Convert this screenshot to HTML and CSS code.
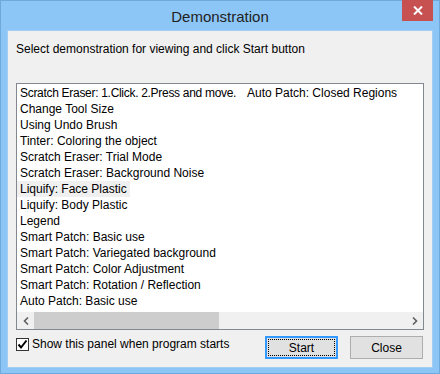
FILE: index.html
```html
<!DOCTYPE html>
<html lang="en">
<head>
    <meta charset="UTF-8">
    <title>Demonstration</title>
    <link rel="stylesheet" href="styles.css">
</head>
<body>
    <div class="window">
        <div class="titlebar">
            <span class="title">Demonstration</span>
            <div class="close-x">
                <svg width="10" height="9" viewBox="0 0 10 9">
                    <path d="M1 0.5 L9 8.5 M9 0.5 L1 8.5" stroke="#fff" stroke-width="2"/>
                </svg>
            </div>
        </div>
        <div class="client">
            <p class="hint">Select demonstration for viewing and click Start button</p>
            <div class="listbox">
                <ul class="items">
                    <li class="tight">Scratch Eraser: 1.Click. 2.Press and move.</li>
                    <li>Change Tool Size</li>
                    <li>Using Undo Brush</li>
                    <li>Tinter: Coloring the object</li>
                    <li>Scratch Eraser: Trial Mode</li>
                    <li>Scratch Eraser: Background Noise</li>
                    <li><span class="hover">Liquify: Face Plastic</span></li>
                    <li>Liquify: Body Plastic</li>
                    <li>Legend</li>
                    <li>Smart Patch: Basic use</li>
                    <li>Smart Patch: Variegated background</li>
                    <li>Smart Patch: Color Adjustment</li>
                    <li>Smart Patch: Rotation / Reflection</li>
                    <li>Auto Patch: Basic use</li>
                    <li>Auto Patch: Closed Regions</li>
                </ul>
                <div class="hscroll">
                    <div class="arrow">
                        <svg width="6" height="8" viewBox="0 0 6 8"><path d="M5 0.5 L1.5 4 L5 7.5" fill="none" stroke="#606060" stroke-width="1.6"/></svg>
                    </div>
                    <div class="track">
                        <div class="thumb"></div>
                    </div>
                    <div class="arrow">
                        <svg width="6" height="8" viewBox="0 0 6 8"><path d="M1 0.5 L4.5 4 L1 7.5" fill="none" stroke="#606060" stroke-width="1.6"/></svg>
                    </div>
                </div>
            </div>
            <div class="bottom">
                <label class="check">
                    <span class="box">
                        <svg width="11" height="11" viewBox="0 0 11 11"><path d="M1.5 5.5 L4 8.5 L9.5 1.5" fill="none" stroke="#000" stroke-width="2"/></svg>
                    </span>
                    Show this panel when program starts
                </label>
                <div class="buttons">
                    <button class="btn default"><span class="focus">Start</span></button>
                    <button class="btn">Close</button>
                </div>
            </div>
        </div>
    </div>
</body>
</html>
```

FILE: styles.css
```css
body {
    margin: 0;
    font-family: "Liberation Sans", Arial, sans-serif;
    font-size: 12px;
    color: #000;
}
.window {
    width: 440px;
    height: 374px;
    box-sizing: border-box;
    border: 1px solid #6fa8dc;
    background-color: #8cc6f7;
    display: flex;
    flex-direction: column;
}
.titlebar {
    height: 29px;
    position: relative;
    display: flex;
    align-items: center;
    justify-content: center;
}
.title {
    font-size: 15px;
    color: #222;
    margin-top: 1px;
}
.close-x {
    position: absolute;
    top: -1px;
    right: 6px;
    width: 31px;
    height: 21px;
    background-color: #c75050;
    display: flex;
    align-items: center;
    justify-content: center;
}
.client {
    flex: 1;
    margin: 0 6px 5px 6px;
    border: 1px solid #a3cdf2;
    background-color: #f0f0f0;
    padding: 10px 8px 0 8px;
    display: flex;
    flex-direction: column;
}
.hint {
    margin: 0;
    line-height: 16px;
}
.listbox {
    margin-top: 26px;
    height: 247px;
    box-sizing: border-box;
    border: 1px solid #828790;
    background-color: #fff;
    display: flex;
    flex-direction: column;
}
.items {
    list-style: none;
    margin: 0;
    padding: 1px 0 0 3px;
    flex: 1;
    overflow: hidden;
    display: grid;
    grid-template-rows: repeat(14, 16px);
    grid-auto-flow: column;
    grid-auto-columns: 227px;
}
.items li {
    line-height: 16px;
    white-space: nowrap;
}
.items li.tight {
    letter-spacing: -0.3px;
    overflow: hidden;
}
.hover {
    background-color: #f0f0f0;
    margin-left: -3px;
    padding: 0 3px 0 3px;
    display: inline-block;
}
.hscroll {
    height: 17px;
    display: flex;
    background-color: #f0f0f0;
}
.arrow {
    width: 17px;
    display: flex;
    align-items: center;
    justify-content: center;
}
.track {
    flex: 1;
}
.thumb {
    width: 185px;
    height: 17px;
    background-color: #cdcdcd;
}
.bottom {
    margin-top: 6px;
    display: flex;
    justify-content: space-between;
    align-items: flex-start;
}
.check {
    display: flex;
    align-items: center;
    gap: 3px;
    margin-top: 1px;
    line-height: 14px;
}
.box {
    width: 11px;
    height: 11px;
    border: 1px solid #333;
    background-color: #fff;
    display: flex;
}
.buttons {
    display: flex;
    gap: 12px;
    margin-right: 1px;
}
.btn {
    width: 73px;
    height: 23px;
    box-sizing: border-box;
    border: 1px solid #adadad;
    background-color: #e1e1e1;
    font-family: "Liberation Sans", Arial, sans-serif;
    font-size: 12px;
    color: #000;
    padding: 0;
    display: flex;
    align-items: center;
    justify-content: center;
}
.btn.default {
    border: 2px solid #3399ff;
    padding: 1px;
}
.focus {
    flex: 1;
    align-self: stretch;
    border: 1px dotted #000;
    display: flex;
    align-items: center;
    justify-content: center;
}
```
